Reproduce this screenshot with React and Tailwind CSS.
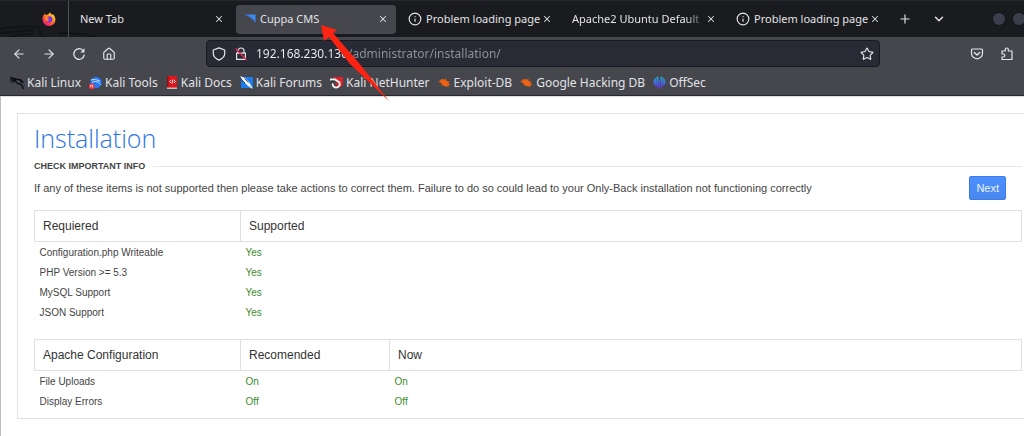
import { ArrowLeft, ArrowRight, ChevronDown, House, Info, Plus, Star, X } from 'lucide-react'

const tabs = [
  { title: 'New Tab' },
  { title: 'Cuppa CMS', icon: 'cuppa', active: true },
  { title: 'Problem loading page', icon: 'info' },
  { title: 'Apache2 Ubuntu Default', fade: true },
  { title: 'Problem loading page', icon: 'info' },
]

const bookmarks = [
  { label: 'Kali Linux', Icon: DragonIcon },
  { label: 'Kali Tools', Icon: ToolsIcon },
  { label: 'Kali Docs', Icon: DocsIcon },
  { label: 'Kali Forums', Icon: ForumsIcon },
  { label: 'Kali NetHunter', Icon: NetHunterIcon },
  { label: 'Exploit-DB', Icon: BugIcon },
  { label: 'Google Hacking DB', Icon: BugIcon },
  { label: 'OffSec', Icon: OffSecIcon },
]

const requirements = ['Configuration.php Writeable', 'PHP Version >= 5.3', 'MySQL Support', 'JSON Support']

const apache = [
  { name: 'File Uploads', recommended: 'On', now: 'On' },
  { name: 'Display Errors', recommended: 'Off', now: 'Off' },
]

function FirefoxIcon() {
  return (
    <svg viewBox="0 0 14 14" className="size-3.5">
      <defs>
        <linearGradient id="fox" x1="1" y1="0" x2="0.2" y2="1">
          <stop offset="0" stopColor="#fff04a" />
          <stop offset="0.4" stopColor="#ff9a20" />
          <stop offset="0.75" stopColor="#ff3b47" />
          <stop offset="1" stopColor="#e31587" />
        </linearGradient>
      </defs>
      <path d="M1.7 3 3 1.6l.5 1.5L6 2.4 8.2.3 9 2l1.5.8L11 2l1.6 2.3.9 3A6.5 6.5 0 0 1 .5 7.6C.4 5.9.9 4.3 1.7 3Z" fill="url(#fox)" />
      <circle cx="7.3" cy="7.3" r="3.1" fill="#7a35e8" />
      <path d="M3.5 4.2 7 5.3c-.3 1-1.6.8-1.5 1.7.1.6 1.2.4 2 .2-.5 2-2.5 2.300-4.300 1Z" fill="#ff8a1c" />
    </svg>
  )
}

function CuppaIcon() {
  return (
    <svg viewBox="0 0 12 12" className="size-3 shrink-0">
      <path d="M0 1.500h11.500V10C9 6 5 3 0 1.500Z" fill="#4189f5" />
      <path d="M2 2c4 1 7 3.500 9 7" stroke="#2b62bb" fill="none" strokeWidth=".8" />
    </svg>
  )
}

function DragonIcon() {
  return (
    <svg viewBox="0 0 14 14" className="size-3.5" fill="none" stroke="#0d0e11">
      <path d="M0 1.500 6 3l3 .5 3 2M0 4l5-.3M1.500 6.500 6 4.200M6 3.500C4.500 6.500 8 7.500 10 8s2.500 2 3.500 5" strokeWidth="1.300" />
      <path d="m8.500 3.500 2.500.2 2.200 2.700-3-.6" strokeWidth="1.100" />
    </svg>
  )
}

function ToolsIcon() {
  return (
    <svg viewBox="0 0 13 13" className="size-[13px]">
      <circle cx="7" cy="6.500" r="5.800" fill="#2578f4" />
      <path d="M2 4c3-.8 6-.5 7.500.8M3 6.500c3-2 5.500-1 8.500 2M8.500 4.500 11 5.200" stroke="#cfe2ff" fill="none" />
      <rect x="0" y="7.500" width="5.500" height="5.500" rx="1.500" fill="#f02c35" />
      <path d="M1.700 11.500V9.300h2v2.200" stroke="#fff" fill="none" strokeWidth=".8" />
    </svg>
  )
}

function DocsIcon() {
  return (
    <svg viewBox="0 0 12 13" className="h-[13px] w-3">
      <path d="M1 0h10v13H1Z" fill="#dd151d" />
      <path d="M1 0h1.500v11H1Z" fill="#8f1015" />
      <path d="M1 11.500h10V13H1Z" fill="#c9b9bb" />
      <path d="M5 4 3.700 5.500 5 7m3-3 1.300 1.500L8 7m-1-3.500-1 4" stroke="#fff" fill="none" strokeWidth=".9" />
    </svg>
  )
}

function ForumsIcon() {
  return (
    <svg viewBox="0 0 13 13" className="size-[13px]">
      <path d="M1 1h12v11H1Z" fill="#1c7df2" />
      <path d="m0 0 5 2 4 4 4 7-5-3-4-4Z" fill="#f5f6f8" />
      <path d="m1 3.500 4 3.500M4.500 2.500l4 4" stroke="#20242e" fill="none" strokeWidth=".8" />
    </svg>
  )
}

function NetHunterIcon() {
  return (
    <svg viewBox="0 0 13 13" className="size-[13px]">
      <path d="M3 1h10v8L9 12 6 5Z" fill="#df2029" />
      <path d="M0 3.500 5 3.500l4.500 3c1 2.500-1 5-3.500 5S2 9 3 7.500" stroke="#f3f3f3" fill="none" strokeWidth="1.900" />
      <path d="M5.500 7.500 8 9" stroke="#df2029" strokeWidth="1.500" />
      <path d="m1 5 4 .3" stroke="#23252c" strokeWidth=".9" />
    </svg>
  )
}

function BugIcon() {
  return (
    <svg viewBox="0 0 13 13" className="size-[13px]">
      <path d="M1.500 4.500c2-2 4-2 5.500-.7l3 1.700c1.300 1.500 1.500 3.500.5 5C7 11 3.500 9.500 1.500 4.500Z" fill="#ee6414" />
      <path d="m0 5.500 3 .8M3 9.500l2-1M7 4l2-1.500M9 6l3-.5M9.500 8l3 .5M4 3l1 2" stroke="#c9551b" strokeWidth=".9" />
    </svg>
  )
}

function OffSecIcon() {
  return (
    <svg viewBox="0 0 13 13" className="size-[13px]">
      <defs>
        <linearGradient id="offsec" x1="0" y1="0" x2="0" y2="1">
          <stop offset="0" stopColor="#17b0c4" />
          <stop offset="1" stopColor="#6a35e4" />
        </linearGradient>
      </defs>
      <path d="M5.500.5v11C-1.300 9.500-1.300 2.500 5.500.5ZM7.500.5v11c6.800-2 6.800-9 0-11Z" fill="url(#offsec)" />
      <path d="M6 4h1v9H6Z" fill="#5a46e0" />
      <path d="M3.300 2v8M9.700 2v8" stroke="#35507c" strokeWidth=".5" />
    </svg>
  )
}

function ReloadIcon() {
  return (
    <svg viewBox="0 0 14 14" className="size-3.5" fill="none" stroke="currentColor" strokeWidth="1.300">
      <path d="M12.300 8.200A5.300 5.300 0 1 1 11 3.400" strokeLinecap="round" />
      <path d="M12.500 1.300v4.200H8.300Z" fill="currentColor" stroke="none" />
    </svg>
  )
}

function ShieldIcon() {
  return (
    <svg viewBox="0 0 14 14" className="size-3.5" fill="none" stroke="#e6e6ea" strokeWidth="1.200">
      <path d="M7 .9 12.700 3v3.500c0 3-2.400 5.200-5.700 6.600C3.700 11.700 1.300 9.500 1.300 6.500V3Z" strokeLinejoin="round" />
    </svg>
  )
}

function InsecureLockIcon() {
  return (
    <svg viewBox="0 0 14 14" className="size-3.5" fill="none">
      <path d="M4 6V4a3 3 0 0 1 6 0v2M2.600 6.200h8.800v6.200H2.600Z" stroke="#e6e6ea" strokeWidth="1.200" />
      <path d="m1.500 1.500 11 11.500" stroke="#e22850" strokeWidth="1.500" />
    </svg>
  )
}

function PocketIcon() {
  return (
    <svg viewBox="0 0 14 14" className="size-3.5" fill="none" stroke="#e6e6ea" strokeWidth="1.200" strokeLinecap="round" strokeLinejoin="round">
      <path d="M2.500 2h9a1 1 0 0 1 1 1v3.300a5.500 5.500 0 0 1-11 0V3a1 1 0 0 1 1-1Z" />
      <path d="M4.300 5.500 7 8l2.700-2.500" strokeWidth="1.400" />
    </svg>
  )
}

function ExtensionIcon() {
  return (
    <svg viewBox="0 0 14 14" className="size-3.5" fill="none" stroke="#e6e6ea" strokeWidth="1.200" strokeLinejoin="round">
      <path d="M2 4h3.300V2.500a1.500 1.500 0 0 1 3 0V4H12v8.500H2V10h1.300a1.500 1.500 0 0 0 0-3H2Z" />
    </svg>
  )
}

function Tab({ tab }) {
  return (
    <div className="w-41 px-0.5">
      <div
        className={
          tab.active
            ? 'flex h-[29px] items-center gap-1 rounded-sm bg-[#45474d] px-2'
            : 'flex h-[29px] items-center gap-1 px-2'
        }
      >
        {tab.icon === 'cuppa' && <CuppaIcon />}
        {tab.icon === 'info' && <Info className="size-3.5 shrink-0" strokeWidth={2} />}
        <span className={tab.fade ? 'flex-1 whitespace-nowrap mask-r-from-85%' : 'flex-1 whitespace-nowrap'}>
          {tab.title}
        </span>
        <button aria-label={'Close ' + tab.title} className="-ml-1 shrink-0">
          <X className="size-2.5" strokeWidth={2.5} />
        </button>
      </div>
    </div>
  )
}

function Browser() {
  return (
    <header className="relative border-b border-[#26272f] bg-[#45474d] font-['Noto_Sans',sans-serif] text-[12px] leading-4 text-[#e2e2e6]">
      {/* Tab strip */}
      <div className="relative flex h-[37px] items-center overflow-hidden border-t border-[#25262f] bg-[#1a1b1f]">
        <svg viewBox="0 0 110 37" className="absolute left-0 h-[37px] w-[110px]" fill="none" stroke="#121316" strokeWidth="2">
          <path d="M0 28c12-2 25-3 38-2l5 11M0 32l34-3M8 37c8-3 16-4 26-4M58 32c15 0 28 1 38 4" />
        </svg>
        <button aria-label="Firefox View" className="relative flex h-full w-[69px] items-center justify-end border-r border-[#505157] pr-3">
          <FirefoxIcon />
        </button>
        <div className="relative flex pl-px text-[11px]">
          {tabs.map((tab, i) => (
            <Tab key={i} tab={tab} />
          ))}
        </div>
        <div className="flex flex-1 items-center gap-5 pl-2">
          <button aria-label="New tab"><Plus className="size-3.5" /></button>
          <button aria-label="List all tabs"><ChevronDown className="size-3.5" strokeWidth={2.5} /></button>
        </div>
        <div className="-mr-0.5 flex shrink-0 gap-1.5">
          <button aria-label="Minimize" className="size-3.5 rounded-full border border-[#121317] bg-[#3a3f4b]" />
          <button aria-label="Maximize" className="size-3.5 rounded-full border border-[#121317] bg-[#3a3f4b]" />
        </div>
      </div>

      {/* Address bar */}
      <div className="flex h-[33px] items-center">
        <div className="flex w-[206px] gap-4 pl-3">
          <button aria-label="Back"><ArrowLeft className="size-3.5" /></button>
          <button aria-label="Forward"><ArrowRight className="size-3.5" /></button>
          <button aria-label="Reload"><ReloadIcon /></button>
          <button aria-label="Home"><House className="size-3.5" /></button>
        </div>
        <div className="flex h-[27px] flex-1 items-center gap-2 rounded-sm border border-[#191a20] bg-[#282a36] px-[5px]">
          <ShieldIcon />
          <InsecureLockIcon />
          <input
            aria-label="Address"
            defaultValue="192.168.230.130/administrator/installation/"
            className="min-w-0 flex-1 bg-linear-to-r from-[#f4f4f6] from-[92px] to-[#92939b] to-[92px] bg-clip-text text-transparent outline-none"
          />
          <button aria-label="Bookmark this page"><Star className="size-3.5" /></button>
        </div>
        <div className="flex w-36 justify-end gap-4 pr-2.5">
          <button aria-label="Save to Pocket"><PocketIcon /></button>
          <button aria-label="Extensions"><ExtensionIcon /></button>
        </div>
      </div>

      {/* Bookmarks */}
      <nav className="flex h-[25px] items-center gap-2 overflow-hidden pl-2.5 whitespace-nowrap">
        {bookmarks.map(({ label, Icon }) => (
          <a key={label} href="#" className="flex items-center gap-[3px]">
            <Icon />
            {label}
          </a>
        ))}
      </nav>

      {/* Pointer arrow over the page tab */}
      <svg viewBox="0 0 72 80" className="pointer-events-none absolute top-6 left-[318px] z-10 h-20 w-[72px]">
        <path d="M3 1 19 6l-4 3 26 30 30 38L32 40 11 13l-5 4Z" fill="#fb2312" />
      </svg>
    </header>
  )
}

const headCell = 'h-[31px] border border-[#e0e0e0] px-2 text-left text-[12px] font-normal text-[#333]'
const bodyCell = 'h-5 px-[5px] pt-[3px]'

function App() {
  return (
    <div className="min-h-screen overflow-hidden bg-white">
      <Browser />
      <main className="min-h-[340px] border-t border-l border-t-[#ddd] border-l-[#bbb] pt-4 pb-4 pl-4 font-['Liberation_Sans',Arial,sans-serif] text-[#444]">
        <section className="border-y border-l border-[#e2e2e2] pt-2 pr-0.5 pb-2 pl-4">
          <h1 className="font-['Open_Sans',sans-serif] text-[25px] leading-8 font-light text-[#2a74e8]">Installation</h1>
          <div className="mt-1 flex items-center gap-2">
            <h2 className="text-[9px] leading-4 font-bold">CHECK IMPORTANT INFO</h2>
            <div className="h-px flex-1 bg-[#e8e8e8]" />
          </div>
          <div className="mt-0.5 flex items-center justify-between gap-4 pr-4">
            <p className="text-[11px] leading-4">
              If any of these items is not supported then please take actions to correct them. Failure to do so could lead to your Only-Back installation not functioning correctly
            </p>
            <button className="h-6 shrink-0 rounded-xs border border-[#3a7cea] bg-linear-to-b from-[#4d90fe] to-[#4787ed] px-1.5 text-[11px] text-[#eef4ff]">
              Next
            </button>
          </div>

          <table className="mt-2.5 w-full table-fixed border-collapse text-[10px] leading-4">
            <thead>
              <tr>
                <th className={headCell + ' w-[206px]'}>Requiered</th>
                <th className={headCell}>Supported</th>
              </tr>
            </thead>
            <tbody>
              {requirements.map(name => (
                <tr key={name}>
                  <td className={bodyCell}>{name}</td>
                  <td className={bodyCell + ' text-[#3d8b2a]'}>Yes</td>
                </tr>
              ))}
            </tbody>
          </table>

          <table className="mt-[17px] w-full table-fixed border-collapse text-[10px] leading-4">
            <thead>
              <tr>
                <th className={headCell + ' w-[206px]'}>Apache Configuration</th>
                <th className={headCell + ' w-[149px]'}>Recomended</th>
                <th className={headCell}>Now</th>
              </tr>
            </thead>
            <tbody>
              {apache.map(row => (
                <tr key={row.name}>
                  <td className={bodyCell}>{row.name}</td>
                  <td className={bodyCell + ' text-[#3d8b2a]'}>{row.recommended}</td>
                  <td className={bodyCell + ' text-[#3d8b2a]'}>{row.now}</td>
                </tr>
              ))}
            </tbody>
          </table>
        </section>
      </main>
    </div>
  )
}

export default App
